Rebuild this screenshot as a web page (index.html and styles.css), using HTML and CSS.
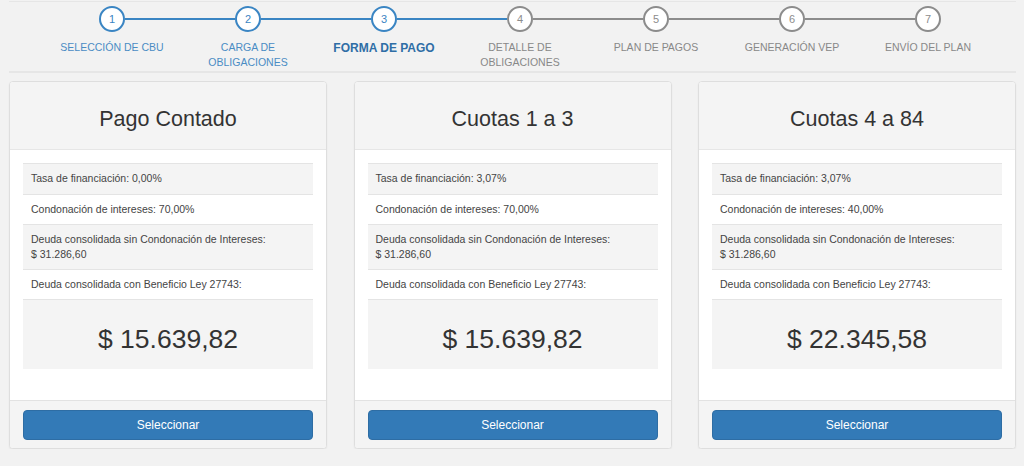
FILE: index.html
```html
<!DOCTYPE html>
<html lang="es">
<head>
<meta charset="utf-8">
<title>Forma de pago</title>
<link rel="stylesheet" href="styles.css">
</head>
<body>
<div class="page">
  <div class="steps">
    <div class="step done">
      <div class="track"><span class="seg none"></span><span class="dot">1</span><span class="seg blue"></span></div>
      <div class="label">SELECCIÓN DE CBU</div>
    </div>
    <div class="step done">
      <div class="track"><span class="seg blue"></span><span class="dot">2</span><span class="seg blue"></span></div>
      <div class="label">CARGA DE OBLIGACIONES</div>
    </div>
    <div class="step active">
      <div class="track"><span class="seg blue"></span><span class="dot">3</span><span class="seg blue"></span></div>
      <div class="label">FORMA DE PAGO</div>
    </div>
    <div class="step todo">
      <div class="track"><span class="seg blue"></span><span class="dot">4</span><span class="seg grey"></span></div>
      <div class="label">DETALLE DE OBLIGACIONES</div>
    </div>
    <div class="step todo">
      <div class="track"><span class="seg grey"></span><span class="dot">5</span><span class="seg grey"></span></div>
      <div class="label">PLAN DE PAGOS</div>
    </div>
    <div class="step todo">
      <div class="track"><span class="seg grey"></span><span class="dot">6</span><span class="seg grey"></span></div>
      <div class="label">GENERACIÓN VEP</div>
    </div>
    <div class="step todo">
      <div class="track"><span class="seg grey"></span><span class="dot">7</span><span class="seg none"></span></div>
      <div class="label">ENVÍO DEL PLAN</div>
    </div>
  </div>

  <div class="cards">
    <div class="card">
      <div class="card-head"><h2 class="card-title">Pago Contado</h2></div>
      <div class="card-body">
        <div class="tbl">
          <div class="row odd">Tasa de financiación: 0,00%</div>
          <div class="row">Condonación de intereses: 70,00%</div>
          <div class="row odd two">Deuda consolidada sin Condonación de Intereses:<br>$ 31.286,60</div>
          <div class="row">Deuda consolidada con Beneficio Ley 27743:</div>
          <div class="row odd amount">$ 15.639,82</div>
        </div>
      </div>
      <div class="card-foot"><button class="btn" type="button">Seleccionar</button></div>
    </div>

    <div class="card">
      <div class="card-head"><h2 class="card-title">Cuotas 1 a 3</h2></div>
      <div class="card-body">
        <div class="tbl">
          <div class="row odd">Tasa de financiación: 3,07%</div>
          <div class="row">Condonación de intereses: 70,00%</div>
          <div class="row odd two">Deuda consolidada sin Condonación de Intereses:<br>$ 31.286,60</div>
          <div class="row">Deuda consolidada con Beneficio Ley 27743:</div>
          <div class="row odd amount">$ 15.639,82</div>
        </div>
      </div>
      <div class="card-foot"><button class="btn" type="button">Seleccionar</button></div>
    </div>

    <div class="card">
      <div class="card-head"><h2 class="card-title">Cuotas 4 a 84</h2></div>
      <div class="card-body">
        <div class="tbl">
          <div class="row odd">Tasa de financiación: 3,07%</div>
          <div class="row">Condonación de intereses: 40,00%</div>
          <div class="row odd two">Deuda consolidada sin Condonación de Intereses:<br>$ 31.286,60</div>
          <div class="row">Deuda consolidada con Beneficio Ley 27743:</div>
          <div class="row odd amount">$ 22.345,58</div>
        </div>
      </div>
      <div class="card-foot"><button class="btn" type="button">Seleccionar</button></div>
    </div>
  </div>
</div>
</body>
</html>
```

FILE: styles.css
```css
html, body {
  margin: 0;
  padding: 0;
  background: #f2f2f2;
  font-family: "Liberation Sans", Arial, sans-serif;
  color: #333;
}

.page {
  margin: 0 8px 0 9px;
  padding-top: 1px;
}

/* ---------- steps ---------- */
.steps {
  display: flex;
  border-top: 1px solid #e6e6e6;
  border-bottom: 2px solid #e6e6e6;
  padding: 4px 0 1px 35px;
}

.step {
  width: 136px;
  display: flex;
  flex-direction: column;
  align-items: center;
}

.track {
  width: 100%;
  display: flex;
  align-items: center;
  height: 26px;
}

.seg {
  flex: 1;
  height: 2px;
}
.seg.blue { background: #3a85c3; }
.seg.grey { background: #8c8c8c; }
.seg.none { background: transparent; }

.dot {
  width: 26px;
  height: 26px;
  box-sizing: border-box;
  border-radius: 50%;
  border: 2px solid #3a85c3;
  background: #fff;
  color: #3a85c3;
  font-size: 11px;
  line-height: 22px;
  text-align: center;
}
.todo .dot {
  border-color: #8c8c8c;
  color: #8c8c8c;
}

.label {
  margin-top: 8px;
  width: 124px;
  text-align: center;
  font-size: 10.5px;
  line-height: 15px;
  color: #4a8cc4;
}
.active .label {
  font-size: 12px;
  font-weight: bold;
  color: #2f6ea6;
  padding-top: 1px;
}
.todo .label { color: #888; }

/* ---------- cards ---------- */
.cards {
  margin-top: 8px;
  display: grid;
  grid-template-columns: repeat(3, 1fr);
  column-gap: 26.5px;
}

.card {
  background: #fff;
  border: 1px solid #dedede;
  border-radius: 4px;
  box-shadow: 0 1px 2px rgba(0, 0, 0, 0.06);
  overflow: hidden;
}

.card-head {
  background: #f4f4f4;
  border-bottom: 1px solid #e6e6e6;
  padding: 22px 13px 15px;
  text-align: center;
}

.card-title {
  margin: 0;
  font-size: 21.5px;
  font-weight: normal;
  line-height: 30px;
  color: #333;
}

.card-body {
  padding: 13px 13px 31px;
}

.row {
  border-top: 1px solid #e4e4e4;
  padding: 7px 8px;
  font-size: 10.5px;
  line-height: 15px;
  color: #444;
}
.row:first-child { padding-bottom: 8px; }
.row.odd { background: #f4f4f4; }

.row.amount {
  padding: 22px 8px 13px;
  font-size: 26.5px;
  line-height: 34px;
  text-align: center;
  color: #333;
}

.card-foot {
  background: #f4f4f4;
  border-top: 1px solid #e2e2e2;
  padding: 9px 13px 8px;
}

.btn {
  display: block;
  width: 100%;
  height: 30px;
  border: 1px solid #2e6da4;
  border-radius: 4px;
  background: #337ab7;
  color: #fff;
  font-family: "Liberation Sans", Arial, sans-serif;
  font-size: 12px;
  line-height: 28px;
  padding: 0;
  cursor: pointer;
}
```
